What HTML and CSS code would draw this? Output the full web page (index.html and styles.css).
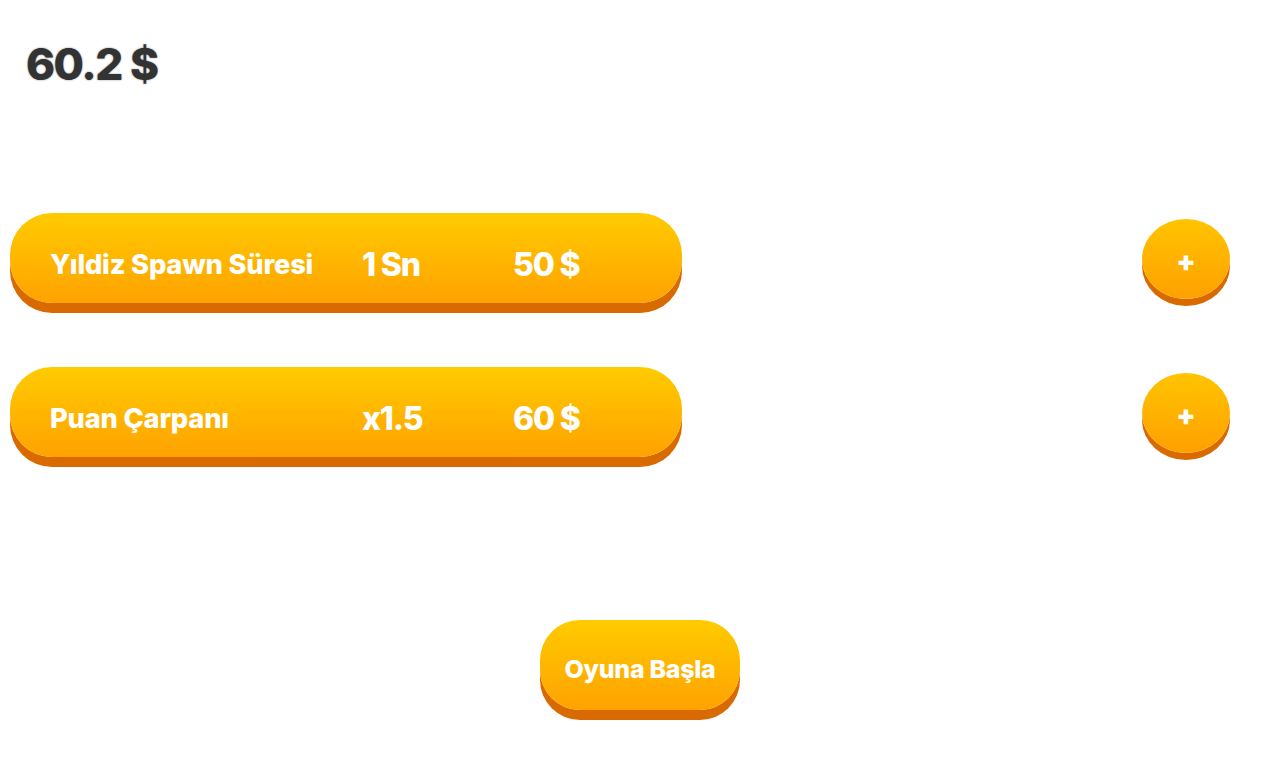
FILE: index.html
```html
<!DOCTYPE html>
<html lang="tr">
<head>
<meta charset="utf-8">
<title>Upgrade</title>
<link rel="stylesheet" href="styles.css">
</head>
<body>
<div class="page">
  <header class="money">60.2 $</header>
  <section class="upgrades">
    <div class="row">
      <div class="bar">
        <span class="label">Yıldiz Spawn Süresi</span>
        <span class="value">1 Sn</span>
        <span class="price">50 $</span>
      </div>
      <button class="plus">+</button>
    </div>
    <div class="row">
      <div class="bar">
        <span class="label">Puan Çarpanı</span>
        <span class="value">x1.5</span>
        <span class="price">60 $</span>
      </div>
      <button class="plus">+</button>
    </div>
  </section>
  <div class="start-wrap">
    <button class="start">Oyuna Başla</button>
  </div>
</div>
</body>
</html>
```
FILE: styles.css
```css
html, body {
  margin: 0;
  padding: 0;
  background: #ffffff;
}
body {
  font-family: "Inter", "Open Sans", "DejaVu Sans", sans-serif;
  width: 1280px;
  height: 779px;
  overflow: hidden;
}
.page {
  display: flex;
  flex-direction: column;
}
.money {
  margin: 36px 0 0 26px;
  font-size: 44px;
  font-weight: 800;
  line-height: 56px;
  letter-spacing: -1.5px;
  color: #333333;
  text-shadow: 0 0 2px rgba(0,0,0,0.45);
}
.upgrades {
  margin-top: 121px;
  display: flex;
  flex-direction: column;
  gap: 64px;
}
.row {
  display: flex;
  justify-content: space-between;
  align-items: flex-start;
  padding: 0 50px 0 10px;
}
.bar {
  box-sizing: border-box;
  width: 672px;
  height: 90px;
  padding: 12px 0 0 40px;
  border-radius: 42px;
  background: linear-gradient(180deg, #ffcb00 0%, #ffa200 100%);
  box-shadow: 0 10px 0 #d86a00;
  display: grid;
  grid-template-columns: 312px 151px auto;
  align-items: center;
  color: #ffffff;
  font-weight: 800;
}
.label {
  font-size: 27.3px;
  letter-spacing: -0.2px;
}
.value, .price {
  font-size: 32px;
  letter-spacing: -1.2px;
}
.plus {
  margin-top: 6px;
  width: 88px;
  height: 80px;
  border: none;
  border-radius: 50%;
  background: linear-gradient(180deg, #ffc400 0%, #ffa000 100%);
  box-shadow: 0 7px 0 #d86a00;
  color: #ffffff;
  font-family: inherit;
  font-size: 28px;
  font-weight: 900;
  line-height: 1;
  padding: 4px 0 0 0;
}
.start-wrap {
  margin-top: 163px;
  display: flex;
  justify-content: center;
}
.start {
  width: 200px;
  height: 90px;
  border: none;
  border-radius: 40px;
  background: linear-gradient(180deg, #ffcb00 0%, #ffa200 100%);
  box-shadow: 0 10px 0 #d86a00;
  color: #ffffff;
  font-family: inherit;
  font-size: 25px;
  font-weight: 800;
  letter-spacing: -0.3px;
  padding: 8px 0 0 0;
}
```
